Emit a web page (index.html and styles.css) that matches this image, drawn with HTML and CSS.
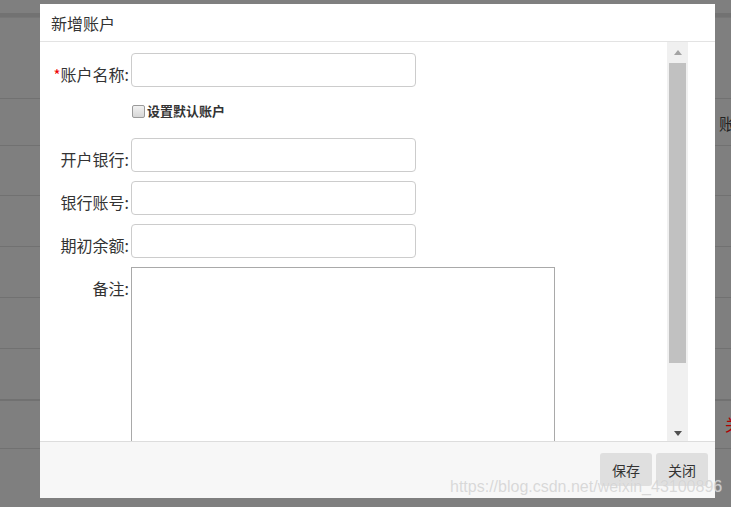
FILE: index.html
```html
<!DOCTYPE html>
<html lang="zh-CN">
<head>
<meta charset="utf-8">
<title>新增账户</title>
<link rel="stylesheet" href="styles.css">
</head>
<body>
<div class="page">
  <div class="page-top"></div>
  <div class="page-band"></div>
  <div class="row r1"></div>
  <div class="row r2"><span class="cell">账户</span></div>
  <div class="row r3"></div>
  <div class="row r4"></div>
  <div class="row r5"></div>
  <div class="row r6"></div>
  <div class="row r7"></div>
  <div class="row r8"><span class="cell red">关闭</span></div>

  <div class="dialog">
    <div class="dlg-head">新增账户</div>
    <div class="dlg-body">
      <div class="content">
        <div class="field">
          <label class="lbl"><span class="req">*</span>账户名称:</label>
          <input class="inp" type="text">
        </div>
        <div class="check-row">
          <span class="cb"></span>
          <span class="cb-text">设置默认账户</span>
        </div>
        <div class="field">
          <label class="lbl">开户银行:</label>
          <input class="inp" type="text">
        </div>
        <div class="field">
          <label class="lbl">银行账号:</label>
          <input class="inp" type="text">
        </div>
        <div class="field">
          <label class="lbl">期初余额:</label>
          <input class="inp" type="text">
        </div>
        <div class="field">
          <label class="lbl">备注:</label>
          <textarea class="ta"></textarea>
        </div>
      </div>
      <div class="vscroll">
        <div class="arrow-box"><span class="arr up"></span></div>
        <div class="thumb-zone"><div class="thumb"></div></div>
        <div class="arrow-box"><span class="arr down"></span></div>
      </div>
      <div class="body-pad"></div>
    </div>
    <div class="dlg-foot">
      <button class="btn">保存</button>
      <button class="btn">关闭</button>
    </div>
  </div>
  <div class="watermark">https://blog.csdn.net/weixin_43100896</div>
</div>
</body>
</html>
```
FILE: styles.css
```css
html, body {
  margin: 0;
  padding: 0;
}
body {
  font-family: "Noto Sans CJK SC", "Liberation Sans", sans-serif;
  color: #333;
}
.page {
  position: relative;
  width: 731px;
  height: 507px;
  background: #7f7f7f;
  overflow: hidden;
}
.page-top {
  height: 13px;
}
.page-band {
  height: 4px;
  background: #727272;
  border-bottom: 1px solid #777;
}
.row {
  box-sizing: border-box;
  border-bottom: 1px solid #717171;
  display: flex;
  align-items: center;
  padding-left: 719px;
  white-space: nowrap;
  font-size: 16px;
}
.r1 { height: 81px; }
.r2 { height: 47px; }
.r3 { height: 50px; }
.r4 { height: 51px; }
.r5 { height: 51px; }
.r6 { height: 51px; }
.r7 { height: 52px; border-bottom-width: 2px; }
.r8 { height: 48px; }
.cell {
  color: #222;
  line-height: 20px;
  margin-top: 2px;
}
.cell.red {
  color: #b00000;
  margin-left: 6px;
  margin-top: -2px;
}

.dialog {
  position: absolute;
  left: 40px;
  top: 4px;
  width: 675px;
  height: 494px;
  background: #fff;
  display: flex;
  flex-direction: column;
}
.dlg-head {
  height: 37px;
  border-bottom: 1px solid #e3e3e3;
  display: flex;
  align-items: center;
  padding-left: 11px;
  font-size: 16px;
  color: #333;
}
.dlg-body {
  height: 399px;
  display: flex;
  overflow: hidden;
}
.content {
  flex: 1;
  padding-top: 11px;
  overflow: hidden;
}
.field {
  display: flex;
  align-items: flex-start;
  margin-bottom: 9px;
}
.lbl {
  width: 89px;
  margin-right: 2px;
  text-align: right;
  font-size: 16px;
  line-height: 22px;
  padding-top: 10px;
  color: #333;
  white-space: nowrap;
}
.req {
  color: #e00;
  font-size: 15px;
}
.inp {
  box-sizing: border-box;
  width: 285px;
  height: 34px;
  border: 1px solid #cccccc;
  border-radius: 4px;
  margin: 0;
  padding: 0 8px;
  background: #fff;
  font-size: 14px;
}
.ta {
  box-sizing: border-box;
  width: 424px;
  height: 200px;
  border: 1px solid #a9a9a9;
  margin: 0;
  padding: 2px;
  resize: none;
  font-size: 14px;
  flex: none;
}
.check-row {
  height: 51px;
  margin-top: -9px;
  display: flex;
  align-items: center;
  padding-left: 91px;
  box-sizing: border-box;
  padding-bottom: 3px;
}
.cb {
  width: 11px;
  height: 11px;
  border: 1px solid #9a9a9a;
  border-radius: 2px;
  background: linear-gradient(#f2f2f2, #d6d6d6);
  margin-left: 1px;
}
.cb-text {
  margin-left: 2px;
  font-size: 13px;
  font-weight: bold;
  color: #333;
  line-height: 18px;
}

.vscroll {
  width: 21px;
  background: #f0f0f0;
  display: flex;
  flex-direction: column;
}
.arrow-box {
  height: 21px;
  display: flex;
  align-items: center;
  justify-content: center;
}
.arr {
  width: 0;
  height: 0;
  border-left: 4.5px solid transparent;
  border-right: 4.5px solid transparent;
}
.arr.up {
  border-bottom: 5px solid #a3a3a3;
}
.arr.down {
  border-top: 5px solid #505050;
  margin-top: 6px;
}
.thumb-zone {
  flex: 1;
  padding: 0 2px;
}
.thumb {
  height: 300px;
  background: #c1c1c1;
}
.body-pad {
  width: 27px;
}
.dlg-foot {
  flex: 1;
  background: #f7f7f7;
  border-top: 1px solid #dddddd;
  display: flex;
  justify-content: flex-end;
  align-items: flex-start;
  padding: 11px 7px 0 0;
  gap: 4px;
}
.btn {
  width: 52px;
  height: 33px;
  border: none;
  border-radius: 3px;
  background: #dfdfdf;
  font-family: "Noto Sans CJK SC", sans-serif;
  font-size: 14px;
  color: #333;
  padding: 0;
}
.watermark {
  position: absolute;
  left: 450px;
  top: 478px;
  font-family: "Liberation Sans", Arial, sans-serif;
  font-size: 16px;
  color: rgba(210, 210, 210, 0.85);
  text-shadow: 0 0 1px rgba(255,255,255,0.4);
  white-space: nowrap;
}
```
